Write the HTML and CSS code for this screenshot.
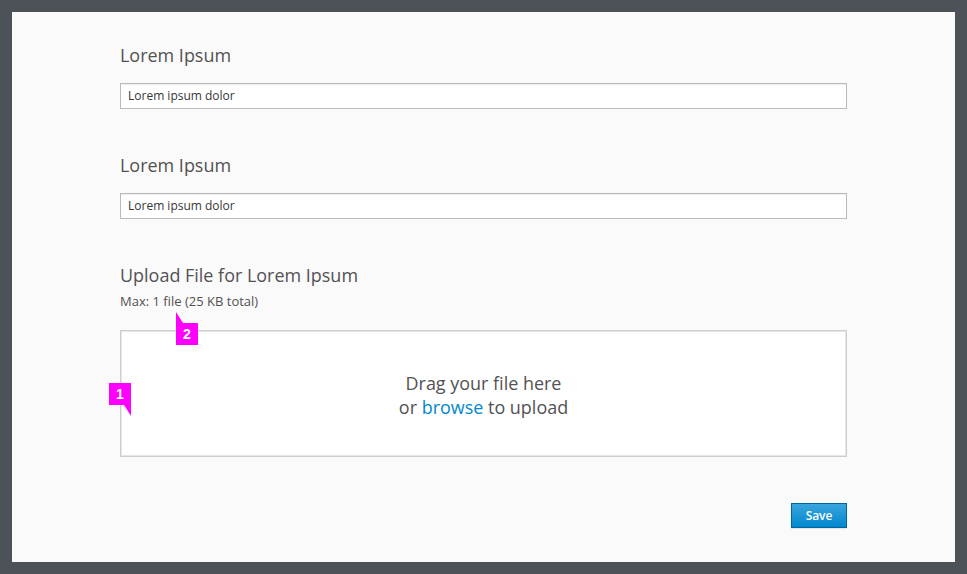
FILE: index.html
```html
<!DOCTYPE html>
<html lang="en">
<head>
<meta charset="utf-8">
<title>Upload form</title>
<link rel="stylesheet" href="styles.css">
</head>
<body>
<main class="page">
  <form class="form">
    <div class="field">
      <label class="heading" for="a">Lorem Ipsum</label>
      <input class="input" id="a" type="text" value="Lorem ipsum dolor">
    </div>
    <div class="field">
      <label class="heading" for="b">Lorem Ipsum</label>
      <input class="input" id="b" type="text" value="Lorem ipsum dolor">
    </div>
    <div class="upload">
      <h2 class="heading">Upload File for Lorem Ipsum</h2>
      <p class="hint">Max: 1 file (25 KB total)</p>
      <div class="dropzone">
        <p class="prompt">Drag your file here<br>or <a class="browse">browse</a> to upload</p>
        <span class="marker marker-one">1</span>
        <span class="marker marker-two">2</span>
      </div>
    </div>
    <button class="save" type="button">Save</button>
  </form>
</main>
</body>
</html>
```
FILE: styles.css
```css
* { box-sizing: border-box; }
body {
  margin: 0;
  height: 574px;
  padding: 12px;
  background: #4d5258;
  font-family: "Open Sans", sans-serif;
  color: #525252;
}
.page {
  height: 550px;
  background: #fafafa;
  padding: 31px 108px 0;
}
.form { display: flex; flex-direction: column; }
.field { height: 110px; }
.heading {
  display: block;
  margin: 0;
  font-size: 17.97px;
  font-weight: 400;
  line-height: 25px;
}
.input {
  display: block;
  width: 100%;
  height: 26px;
  margin-top: 15px;
  padding: 0 7px 1px;
  border: 1px solid #bababa;
  border-radius: 0;
  background: #fff;
  box-shadow: inset 0 1px 1px rgba(0, 0, 0, 0.075);
  color: #363636;
  font: 12px "Open Sans", sans-serif;
}
.hint { margin: 4px 0 0; font-size: 13px; line-height: 18px; }
.dropzone {
  position: relative;
  display: flex;
  align-items: center;
  justify-content: center;
  height: 127px;
  margin-top: 20px;
  border: 1px solid #cecece;
  background: #fff;
  box-shadow: inset 0 0 0 1px #e6e6e6;
}
.prompt {
  margin: 3px 0 0;
  font-size: 17.97px;
  line-height: 24px;
  text-align: center;
}
.browse { color: #0088ce; }
.marker {
  position: absolute;
  width: 22px;
  height: 22px;
  background: #f0f;
  color: #fff;
  font: bold 14px/22px "Liberation Sans", sans-serif;
  text-align: center;
}
.marker::after {
  content: "";
  position: absolute;
  width: 7px;
  height: 11px;
  background: #f0f;
}
.marker-one { left: -12px; top: 52px; }
.marker-one::after { right: 0; top: 22px; clip-path: polygon(0 0, 100% 0, 100% 100%); }
.marker-two { left: 55px; top: -8px; }
.marker-two::after { left: 0; bottom: 22px; clip-path: polygon(0 0, 100% 100%, 0 100%); }
.save {
  align-self: flex-end;
  width: 56px;
  height: 25px;
  margin-top: 46px;
  padding: 0;
  border: 1px solid #00659c;
  border-radius: 0;
  background: linear-gradient(#39a5dc, #0088ce);
  box-shadow: 0 1px 1px rgba(0, 0, 0, 0.08);
  color: #fff;
  font: 600 12px "Open Sans", sans-serif;
  letter-spacing: -0.1px;
}
```
